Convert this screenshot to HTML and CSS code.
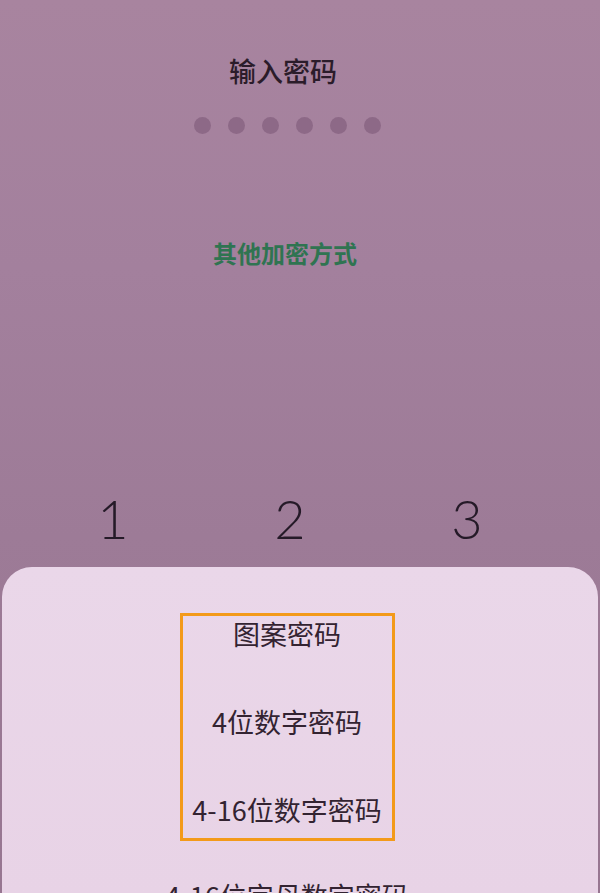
FILE: index.html
```html
<!DOCTYPE html>
<html lang="zh-CN">
<head>
<meta charset="utf-8">
<title>输入密码</title>
<link rel="stylesheet" href="styles.css">
</head>
<body>
<div class="screen">
  <div class="lock">
    <h1 class="title">输入密码</h1>
    <div class="dots">
      <span class="dot"></span><span class="dot"></span><span class="dot"></span>
      <span class="dot"></span><span class="dot"></span><span class="dot"></span>
    </div>
    <div class="other">其他加密方式</div>
    <div class="keys">
      <span class="key">1</span>
      <span class="key">2</span>
      <span class="key">3</span>
    </div>
  </div>
  <div class="sheet">
    <div class="highlight">
      <div class="option">图案密码</div>
      <div class="option">4位数字密码</div>
      <div class="option">4-16位数字密码</div>
    </div>
    <div class="option last">4-16位字母数字密码</div>
  </div>
</div>
</body>
</html>
```
FILE: styles.css
```css
html, body {
  margin: 0;
  padding: 0;
}
body {
  width: 600px;
  height: 893px;
  overflow: hidden;
  font-family: "Noto Sans CJK SC", "Noto Sans", sans-serif;
}
.screen {
  height: 893px;
  display: flex;
  flex-direction: column;
  background: linear-gradient(180deg, #a8849f 0%, #a3809d 30%, #9d7b97 60%, #977691 100%);
}
.lock {
  height: 567px;
  flex-shrink: 0;
  display: flex;
  flex-direction: column;
  align-items: center;
  padding-right: 26px;
  box-sizing: border-box;
}
.title {
  margin: 52px 8px 0 0;
  font-size: 27px;
  line-height: 38px;
  font-weight: 500;
  color: #2b1c2a;
}
.dots {
  margin-top: 26px;
  display: flex;
  gap: 17px;
  height: 18px;
  align-items: center;
}
.dot {
  width: 17px;
  height: 17px;
  border-radius: 50%;
  background: #8d6987;
}
.other {
  margin: 103px 4px 0 0;
  font-size: 24px;
  line-height: 32px;
  font-weight: 700;
  color: #2f7451;
}
.keys {
  margin: 220px 0 0 6px;
  display: grid;
  grid-template-columns: repeat(3, 177px);
}
.key {
  text-align: center;
  font-family: "Lato", "Roboto", sans-serif;
  font-weight: 300;
  font-size: 54px;
  line-height: 60px;
  color: #251a28;
}
.sheet {
  flex: 1;
  min-height: 0;
  overflow: hidden;
  background: linear-gradient(180deg, #ead7e9 0%, #e8d3e6 100%);
  border-radius: 30px 30px 0 0;
  margin: 0 2px;
  display: flex;
  flex-direction: column;
  align-items: center;
  padding-top: 46px;
  padding-right: 26px;
}
.highlight {
  flex-shrink: 0;
  width: 209px;
  border: 3px solid #f39a1a;
  display: flex;
  flex-direction: column;
  gap: 53px;
  align-items: center;
  padding: 0 0 11px;
}
.option {
  flex-shrink: 0;
  font-size: 27px;
  line-height: 35px;
  color: #332331;
  white-space: nowrap;
}
.last {
  margin-top: 37px;
}
```
